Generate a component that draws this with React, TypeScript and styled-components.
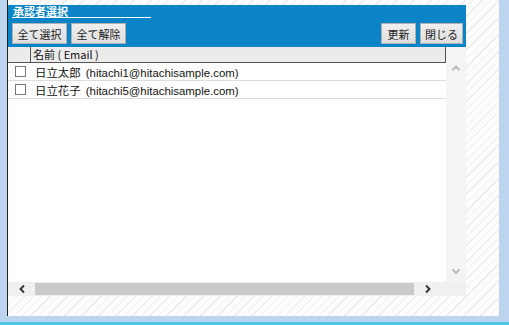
import React, { useState } from 'react';
import styled, { createGlobalStyle } from 'styled-components';

const GlobalStyle = createGlobalStyle`
  html, body {
    margin: 0;
    padding: 0;
    background: #ffffff;
  }
  body {
    font-family: "Liberation Sans", "Noto Sans CJK JP", sans-serif;
  }
`;

const hatch = `repeating-linear-gradient(135deg, #fdfdfd 0px, #fdfdfd 5px, #ececec 5px, #ececec 6px)`;

const Frame = styled.div`
  width: 509px;
  height: 325px;
  box-sizing: border-box;
  background: #bcd4ee;
  padding: 0 10px 6px 7px;
  border-bottom: 3px solid #4fc6e8;
  display: flex;
`;

const Surface = styled.div`
  flex: 1;
  display: flex;
  border-left: 1px solid #222;
  background: ${hatch};
  padding-top: 5px;
`;

const Dialog = styled.div`
  width: 458px;
  display: flex;
  flex-direction: column;
`;

const Header = styled.div`
  background: #0a84c7;
  height: 42px;
  box-sizing: border-box;
  padding: 0 3px 0 4px;
  display: flex;
  flex-direction: column;
`;

const Title = styled.div`
  color: #fff;
  font-family: "Noto Sans CJK JP", serif;
  font-weight: 700;
  font-size: 11px;
  line-height: 12px;
  width: 138px;
  padding-left: 1px;
  border-bottom: 1px solid #fff;
  margin-bottom: 5px;
`;

const Toolbar = styled.div`
  display: flex;
  gap: 4px;
`;

const Spacer = styled.div`
  flex: 1;
`;

const Button = styled.button<{ $w: number }>`
  width: ${(p) => p.$w}px;
  height: 21px;
  padding: 0;
  border: 1px solid #b0b0b0;
  background: linear-gradient(#efefef, #dedede);
  font-family: "Noto Sans CJK JP", sans-serif;
  font-size: 11px;
  color: #222;
  cursor: pointer;
`;

const Body = styled.div`
  display: flex;
  height: 235px;
`;

const GridArea = styled.div`
  width: 438px;
  background: #fff;
  display: flex;
  flex-direction: column;
`;

const HeadRow = styled.div`
  height: 16px;
  box-sizing: border-box;
  display: flex;
  background: #ebebeb;
  border-bottom: 1px solid #555;
  border-right: 1px solid #555;
`;

const CheckHead = styled.div`
  width: 22px;
  border-right: 1px solid #555;
`;

const HeadCell = styled.div`
  padding-left: 2px;
  font-family: "Noto Sans CJK JP", sans-serif;
  font-size: 11px;
  line-height: 15px;
  color: #111;
`;

const Row = styled.div`
  height: 18px;
  box-sizing: border-box;
  display: flex;
  align-items: center;
  border-bottom: 1px solid #dcdcdc;
`;

const CheckCell = styled.div`
  width: 25px;
  display: flex;
  justify-content: center;
`;

const Check = styled.span<{ $on: boolean }>`
  width: 9px;
  height: 9px;
  border: 1px solid #777;
  background: ${(p) => (p.$on ? '#0a84c7' : '#fff')};
  cursor: pointer;
`;

const Cell = styled.div`
  font-family: "Liberation Sans", "Noto Sans CJK JP", sans-serif;
  font-size: 11.4px;
  color: #111;
  padding-left: 2px;
  word-spacing: 2px;
`;

const VScroll = styled.div`
  width: 20px;
  background: #f4f4f4;
  display: flex;
  flex-direction: column;
  justify-content: space-between;
  align-items: center;
  padding: 16px 0 6px;
`;

const HScroll = styled.div`
  height: 14px;
  background: #f0f0f0;
  display: flex;
  align-items: center;
`;

const ArrowBox = styled.div`
  width: 27px;
  display: flex;
  justify-content: center;
`;

const Thumb = styled.div`
  width: 379px;
  height: 12px;
  background: #c9c9c9;
`;

const Chevron = ({ d, color }: { d: string; color: string }) => (
  <svg width="10" height="10" viewBox="0 0 10 10">
    <path d={d} fill="none" stroke={color} strokeWidth="1.9" />
  </svg>
);

const people = [
  { name: '日立太郎', email: 'hitachi1@hitachisample.com' },
  { name: '日立花子', email: 'hitachi5@hitachisample.com' },
];

export default function App() {
  const [checked, setChecked] = useState<boolean[]>([false, false]);

  return (
    <>
      <GlobalStyle />
      <Frame>
        <Surface>
          <Dialog>
            <Header>
              <Title>承認者選択</Title>
              <Toolbar>
                <Button $w={55} onClick={() => setChecked([true, true])}>全て選択</Button>
                <Button $w={55} onClick={() => setChecked([false, false])}>全て解除</Button>
                <Spacer />
                <Button $w={35}>更新</Button>
                <Button $w={43}>閉じる</Button>
              </Toolbar>
            </Header>
            <Body>
              <GridArea>
                <HeadRow>
                  <CheckHead />
                  <HeadCell>名前 ( Email )</HeadCell>
                </HeadRow>
                {people.map((p, i) => (
                  <Row key={p.email}>
                    <CheckCell>
                      <Check
                        $on={checked[i]}
                        onClick={() => setChecked(checked.map((c, j) => (j === i ? !c : c)))}
                      />
                    </CheckCell>
                    <Cell>
                      {p.name} ({p.email})
                    </Cell>
                  </Row>
                ))}
              </GridArea>
              <VScroll>
                <Chevron d="M1.5 7 L5 3.5 L8.5 7" color="#b8b8b8" />
                <Chevron d="M1.5 3.5 L5 7 L8.5 3.5" color="#b8b8b8" />
              </VScroll>
            </Body>
            <HScroll>
              <ArrowBox>
                <Chevron d="M7 1.5 L3.5 5 L7 8.5" color="#333" />
              </ArrowBox>
              <Thumb />
              <ArrowBox>
                <Chevron d="M3 1.5 L6.5 5 L3 8.5" color="#333" />
              </ArrowBox>
            </HScroll>
          </Dialog>
        </Surface>
      </Frame>
    </>
  );
}
